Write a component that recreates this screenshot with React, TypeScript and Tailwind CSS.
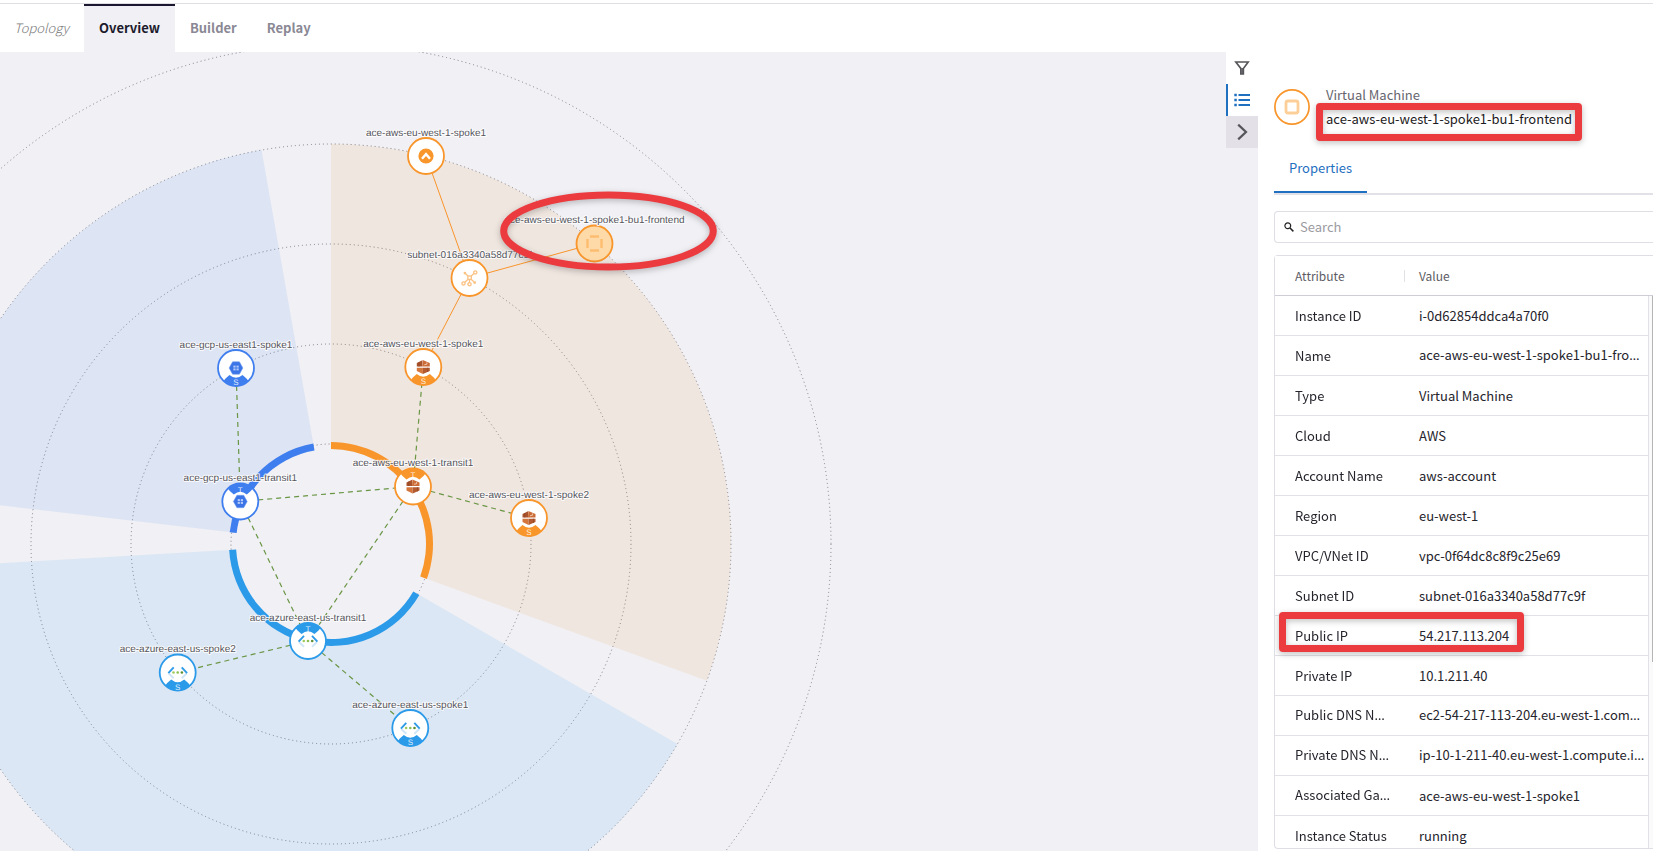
import React from 'react';

const ORANGE = '#f8952b';
const BLUE = '#3f7eee';
const SKY = '#2b9ae9';

type Provider = 'aws' | 'gcp' | 'azure';

interface TopologyNode {
  id: string;
  label: string;
  x: number;
  y: number;
  provider: Provider;
  kind: 'gateway' | 'subnet' | 'vm' | 'aviatrix';
  role?: 'T' | 'S';
}

const COLORS: Record<Provider, string> = { aws: ORANGE, gcp: BLUE, azure: SKY };

// Node positions are relative to the centre of the rings.
const NODES: TopologyNode[] = [
  { id: 'gw', label: 'ace-aws-eu-west-1-spoke1', x: 95, y: -388, provider: 'aws', kind: 'aviatrix' },
  { id: 'subnet', label: 'subnet-016a3340a58d77c9f', x: 138.5, y: -266, provider: 'aws', kind: 'subnet' },
  { id: 'vm', label: 'ace-aws-eu-west-1-spoke1-bu1-frontend', x: 263.5, y: -300.5, provider: 'aws', kind: 'vm' },
  { id: 'awsS1', label: 'ace-aws-eu-west-1-spoke1', x: 92.3, y: -177, provider: 'aws', kind: 'gateway', role: 'S' },
  { id: 'awsT', label: 'ace-aws-eu-west-1-transit1', x: 82, y: -57.5, provider: 'aws', kind: 'gateway', role: 'T' },
  { id: 'awsS2', label: 'ace-aws-eu-west-1-spoke2', x: 198, y: -26, provider: 'aws', kind: 'gateway', role: 'S' },
  { id: 'gcpS', label: 'ace-gcp-us-east1-spoke1', x: -95, y: -176, provider: 'gcp', kind: 'gateway', role: 'S' },
  { id: 'gcpT', label: 'ace-gcp-us-east1-transit1', x: -90.7, y: -42.5, provider: 'gcp', kind: 'gateway', role: 'T' },
  { id: 'azT', label: 'ace-azure-east-us-transit1', x: -23, y: 97, provider: 'azure', kind: 'gateway', role: 'T' },
  { id: 'azS2', label: 'ace-azure-east-us-spoke2', x: -153.3, y: 128.5, provider: 'azure', kind: 'gateway', role: 'S' },
  { id: 'azS1', label: 'ace-azure-east-us-spoke1', x: 79.3, y: 184, provider: 'azure', kind: 'gateway', role: 'S' },
];

const SOLID_LINKS: [string, string][] = [
  ['gw', 'subnet'],
  ['subnet', 'vm'],
  ['subnet', 'awsS1'],
];

const DASHED_LINKS: [string, string][] = [
  ['gcpS', 'gcpT'],
  ['gcpT', 'awsT'],
  ['gcpT', 'azT'],
  ['awsT', 'azT'],
  ['awsT', 'awsS1'],
  ['awsT', 'awsS2'],
  ['azT', 'azS2'],
  ['azT', 'azS1'],
];

const SECTORS = [
  { from: 0, to: 110, color: ORANGE },
  { from: 120, to: 266.67, color: SKY },
  { from: 276.67, to: 350, color: BLUE },
];

const RINGS = [100, 200, 300, 400, 500];

const ROWS: [string, string][] = [
  ['Instance ID', 'i-0d62854ddca4a70f0'],
  ['Name', 'ace-aws-eu-west-1-spoke1-bu1-fro…'],
  ['Type', 'Virtual Machine'],
  ['Cloud', 'AWS'],
  ['Account Name', 'aws-account'],
  ['Region', 'eu-west-1'],
  ['VPC/VNet ID', 'vpc-0f64dc8c8f9c25e69'],
  ['Subnet ID', 'subnet-016a3340a58d77c9f'],
  ['Public IP', '54.217.113.204'],
  ['Private IP', '10.1.211.40'],
  ['Public DNS N…', 'ec2-54-217-113-204.eu-west-1.com…'],
  ['Private DNS N…', 'ip-10-1-211-40.eu-west-1.compute.i…'],
  ['Associated Ga…', 'ace-aws-eu-west-1-spoke1'],
  ['Instance Status', 'running'],
];

function polar(radius: number, degrees: number) {
  const a = ((degrees - 90) * Math.PI) / 180;
  return `${(radius * Math.cos(a)).toFixed(2)} ${(radius * Math.sin(a)).toFixed(2)}`;
}

function band(inner: number, outer: number, from: number, to: number) {
  const large = to - from > 180 ? 1 : 0;
  return `M${polar(outer, from)} A${outer} ${outer} 0 ${large} 1 ${polar(outer, to)} L${polar(inner, to)} A${inner} ${inner} 0 ${large} 0 ${polar(inner, from)} Z`;
}

function find(id: string) {
  return NODES.find((n) => n.id === id)!;
}

function AwsGlyph() {
  return (
    <g>
      <path d="M-6.5 -4 L-1 -6.8 L-1 -0.5 L-6.5 -0.5 Z" fill="#a9532c" />
      <path d="M-0.6 -7 L6.5 -4 L6.5 -0.5 L-1 -0.5 Z" fill="#cb6c38" />
      <path d="M-6.5 0.7 L-0.4 0.7 L-0.4 7 L-6.5 4 Z" fill="#d4763c" />
      <path d="M-0.4 0.7 L6.5 0.7 L6.5 4 L-0.4 7 Z" fill="#b35a30" />
      <path d="M1 -2.2 L3.6 -2.8 V-4.6" fill="none" stroke="#f3cdb4" strokeWidth="0.9" />
      <path d="M-4.3 -5 V-0.5 M4.4 0.7 V5" stroke="#8f4322" strokeWidth="0.7" />
    </g>
  );
}

function GcpGlyph() {
  return (
    <g>
      <path d="M-3.4 -6.2 H3.4 L6.9 0 L3.4 6.2 H-3.4 L-6.9 0 Z" fill="#3b74e6" stroke="#6f9cf0" strokeWidth="0.6" />
      <g fill="#b3cafa">
        <rect x="-2.6" y="-2.4" width="2.2" height="2" />
        <rect x="0.5" y="-2.4" width="2.2" height="2" />
        <rect x="-2.6" y="0.4" width="2.2" height="2" />
        <rect x="0.5" y="0.4" width="2.2" height="2" />
      </g>
    </g>
  );
}

function AzureGlyph() {
  return (
    <g fill="none" strokeWidth="1.9">
      <path d="M-9 1 L-4 5.8 M9 1 L4 5.8" stroke="#cfe6f8" />
      <path d="M-4 -5.2 L-9.4 0.6 M4 -5.2 L9.4 0.6" stroke="#2f9be6" />
      <circle cx="-4.2" cy="0" r="1.3" fill="#9ccb5c" />
      <circle cx="0" cy="0" r="1.3" fill="#8cc152" />
      <circle cx="4.2" cy="0" r="1.3" fill="#5d8f35" />
    </g>
  );
}

function SubnetGlyph() {
  return (
    <g fill="none" stroke="#fbc182" strokeWidth="1.3">
      <rect x="-1.6" y="-2" width="3.4" height="3.4" />
      <path d="M-1.6 -2 L-4 -4.4 M1.8 -2 L4.4 -4.6 M-1.6 1.4 L-4.6 4.2 M0 1.4 L0 4.6 M1.8 1.4 L4.4 3.8" />
      <circle cx="5.8" cy="-5.6" r="1.6" />
      <circle cx="-6" cy="5.4" r="1.6" />
      <circle cx="0" cy="6.2" r="1.6" />
      <circle cx="-4.6" cy="-4.9" r="0.7" />
      <circle cx="5.2" cy="4.6" r="0.8" />
    </g>
  );
}

function NodeMark({ node }: { node: TopologyNode }) {
  const color = COLORS[node.provider];
  const flip = node.role === 'T' ? -1 : 1;
  return (
    <g transform={`translate(${node.x} ${node.y})`}>
      <circle r="18" fill={node.kind === 'vm' ? '#fddaa8' : '#fff'} stroke={color} strokeWidth="1.8" />
      {node.role && (
        <>
          <path
            d="M-12.5 13 L-10.5 10.5 L-6.5 7 Q0 12.5 6.5 7 L10.5 10.5 L12.5 13 A18 18 0 0 1 -12.5 13 Z"
            fill={color}
            transform={`scale(1 ${flip})`}
          />
          <text y={flip > 0 ? 17 : -9} textAnchor="middle" fontSize="8" fill="#fff" fillOpacity="0.85">
            {node.role}
          </text>
        </>
      )}
      {node.kind === 'gateway' && node.provider === 'aws' && <AwsGlyph />}
      {node.kind === 'gateway' && node.provider === 'gcp' && <GcpGlyph />}
      {node.kind === 'gateway' && node.provider === 'azure' && <AzureGlyph />}
      {node.kind === 'subnet' && <SubnetGlyph />}
      {node.kind === 'aviatrix' && (
        <>
          <circle r="7.6" fill={ORANGE} />
          <path d="M-4 2.8 L0 -1.8 L4 2.8" fill="none" stroke="#fff" strokeWidth="2.4" />
        </>
      )}
      {node.kind === 'vm' && (
        <path
          d="M-4.5 -7 H4.5 M-4.5 7 H4.5 M-7 -4.5 V4.5 M7 -4.5 V4.5"
          stroke="#fcbd70"
          strokeWidth="2.4"
          fill="none"
        />
      )}
    </g>
  );
}

function TopologyMap() {
  return (
    <svg
      className="block h-full w-full"
      role="img"
      aria-label="Network topology"
      fontFamily="'Liberation Sans', Arial, sans-serif"
      textRendering="geometricPrecision"
    >
      <g transform="translate(331 492)">
        <g fill="none" stroke="#7f7f87" strokeDasharray="1 3">
          {RINGS.map((r) => (
            <circle key={r} r={r} />
          ))}
        </g>
        {SECTORS.map((s) => (
          <g key={s.color} fill={s.color}>
            <path d={band(98, 400, s.from, s.to)} fillOpacity="0.1" />
            <path d={band(95, 102, s.from, s.to)} />
          </g>
        ))}
        <g stroke={ORANGE} strokeWidth="1">
          {SOLID_LINKS.map(([a, b]) => (
            <line key={a + b} x1={find(a).x} y1={find(a).y} x2={find(b).x} y2={find(b).y} />
          ))}
        </g>
        <g stroke="#6a9645" strokeWidth="1.2" strokeDasharray="5 4">
          {DASHED_LINKS.map(([a, b]) => (
            <line key={a + b} x1={find(a).x} y1={find(a).y} x2={find(b).x} y2={find(b).y} />
          ))}
        </g>
        {NODES.map((n) => (
          <NodeMark key={n.id} node={n} />
        ))}
        <g fontSize="10" fill="#55555c" stroke="#fff" strokeWidth="2" strokeOpacity="0.85" strokeLinejoin="round" paintOrder="stroke" textAnchor="middle">
          {NODES.map((n) => (
            <text key={n.id} x={n.x} y={n.y - 20.5}>
              {n.label}
            </text>
          ))}
        </g>
        <ellipse
          cx="277.5"
          cy="-313"
          rx="104.8"
          ry="36"
          fill="none"
          stroke="#eb3b3f"
          strokeWidth="7"
          className="drop-shadow-[0_2px_3px_rgba(0,0,0,0.25)]"
        />
      </g>
    </svg>
  );
}

function Highlight({ className }: { className: string }) {
  return (
    <div
      className={`pointer-events-none absolute rounded-sm border-[7px] border-[#eb3b3f] drop-shadow-[0_2px_3px_rgba(0,0,0,0.25)] ${className}`}
    />
  );
}

// The CJK face centres its ellipsis, so that glyph comes from Noto Sans.
function CellText({ text }: { text: string }) {
  const shortened = text.endsWith('…');
  return (
    <div className="whitespace-nowrap">
      {shortened ? text.slice(0, -1) : text}
      {shortened && <span className="font-['Noto_Sans',sans-serif]">…</span>}
    </div>
  );
}

function Tabs() {
  const tab = 'h-full border-t-2 px-[15px] pb-0.5 font-bold';
  return (
    <nav className="mt-[3px] flex h-[49px] shrink-0 items-stretch border-t border-[#dedee3] text-[13px]">
      <span className="flex w-[84px] items-center pl-3.5 font-light text-[#777] italic">Topology</span>
      <button className={`${tab} border-[#1b1730] bg-[#f0f0f5] text-[#1d1b2c]`}>Overview</button>
      <button className={`${tab} border-transparent text-[#8a8894]`}>Builder</button>
      <button className={`${tab} border-transparent text-[#8a8894]`}>Replay</button>
    </nav>
  );
}

function Toolbar() {
  return (
    <div className="flex w-8 shrink-0 flex-col bg-[#f0f0f5]">
      <button aria-label="Filter" className="flex h-8 items-center justify-center bg-white">
        <svg width="16" height="16" viewBox="0 0 16 16" fill="none" stroke="#55555a" strokeWidth="1.6">
          <path d="M1.8 2 H14.2 L9.4 8.4 V14 H6.8 V8.4 Z" />
          <path d="M8.1 8 V14" />
        </svg>
      </button>
      <button aria-label="Properties list" className="flex h-8 items-center justify-center border-l-2 border-[#1f70c0] bg-white pr-0.5">
        <svg width="16" height="16" viewBox="0 0 16 16" fill="none" stroke="#1f70c0" strokeWidth="1.8">
          <path d="M4.5 3 H16 M4.5 8 H16 M4.5 13 H16" />
          <path d="M0.3 3 H2.8 M0.3 8 H2.8 M0.3 13 H2.8" strokeWidth="2.4" />
        </svg>
      </button>
      <button aria-label="Collapse panel" className="flex h-8 items-center justify-center bg-[#e3e0e7]">
        <svg width="16" height="16" viewBox="0 0 16 16" fill="none" stroke="#55555a" strokeWidth="2.2">
          <path d="M4.2 0.6 L12 8 L4.2 15.4" />
        </svg>
      </button>
    </div>
  );
}

function Panel() {
  return (
    <aside className="flex w-[395px] shrink-0 flex-col pb-0.5 pl-4">
      <header className="flex pt-[37px]">
        <svg width="36" height="36" viewBox="0 0 36 36" fill="none" className="shrink-0">
          <circle cx="18" cy="18" r="17.1" stroke={ORANGE} strokeWidth="1.7" />
          <rect x="12" y="12" width="12" height="12" rx="2" stroke="#fdcf98" strokeWidth="2.8" />
        </svg>
        <div className="ml-4 -mt-1.5 text-[13px] leading-6">
          <p className="text-[#66656e]">Virtual Machine</p>
          <div className="relative">
            <h2 className="text-[#1d1b22]">ace-aws-eu-west-1-spoke1-bu1-frontend</h2>
            <Highlight className="-top-1 -right-2.5 -left-2.5 h-[38px]" />
          </div>
        </div>
      </header>
      <div className="mt-3.5 border-b-2 border-[#e2e1e7]">
        <button className="block h-12 w-[93px] border-b-2 border-[#1f70c0] text-[13px] text-[#1f70c0]">
          Properties
        </button>
      </div>
      <label className="mt-4 flex h-8 shrink-0 items-center gap-1.5 rounded-l border border-r-0 border-[#dfdee5] pl-[9px]">
        <svg width="10" height="10" viewBox="0 0 10 10" fill="none" stroke="#222" strokeWidth="1.2">
          <circle cx="3.8" cy="3.8" r="2.9" />
          <path d="M6 6 L9.4 9.4" strokeWidth="1.5" />
        </svg>
        <input
          aria-label="Search"
          placeholder="Search"
          className="min-w-0 flex-1 bg-transparent text-[13px] outline-none placeholder:text-[#9b9aa1]"
        />
      </label>
      <div className="mt-3 flex min-h-0 flex-1 flex-col rounded-l border border-r-0 border-[#dfdee5]">
        <div className="flex min-h-0 flex-1">
          <div className="min-h-0 flex-1 overflow-y-auto [scrollbar-width:none]">
            <table className="w-full table-fixed border-separate border-spacing-0 text-left text-[13px]">
              <thead className="text-[12px] text-[#5c5b64]">
                <tr className="h-10">
                  <th className="sticky top-0 w-[130px] border-b border-[#cfced6] bg-white p-0 font-normal">
                    <div className="flex h-3 items-center border-r border-[#e2e1e7] pl-5">Attribute</div>
                  </th>
                  <th className="sticky top-0 border-b border-[#cfced6] bg-white p-0 pl-3.5 font-normal">Value</th>
                </tr>
              </thead>
              <tbody className="text-[#25242c]">
                {ROWS.map(([name, value]) => (
                  <tr key={name} className="h-10">
                    <td className="relative border-b border-[#e2e1e7] p-0 pl-5">
                      <CellText text={name} />
                      {name === 'Public IP' && <Highlight className="-top-1 left-1 z-10 h-10 w-[245px]" />}
                    </td>
                    <td className="border-b border-[#e2e1e7] p-0 pl-3.5">
                      <CellText text={value} />
                    </td>
                  </tr>
                ))}
              </tbody>
            </table>
          </div>
          <div className="flex w-[5px] shrink-0 flex-col">
            <div className="h-10 border-b border-[#cfced6]" />
            <div className="flex flex-1 justify-end border-l border-[#e2e1e7] bg-[#fafafa]">
              <div className="h-[366px] w-px bg-[#b5b5b8]" />
            </div>
          </div>
        </div>
      </div>
    </aside>
  );
}

export default function App() {
  return (
    <div className="flex h-screen flex-col overflow-hidden bg-white font-['Noto_Sans_CJK_SC','Noto_Sans',sans-serif]">
      <Tabs />
      <main className="flex min-h-0 flex-1">
        <section className="min-w-0 flex-1 overflow-hidden bg-[#f0f0f5]">
          <TopologyMap />
        </section>
        <Toolbar />
        <Panel />
      </main>
    </div>
  );
}
